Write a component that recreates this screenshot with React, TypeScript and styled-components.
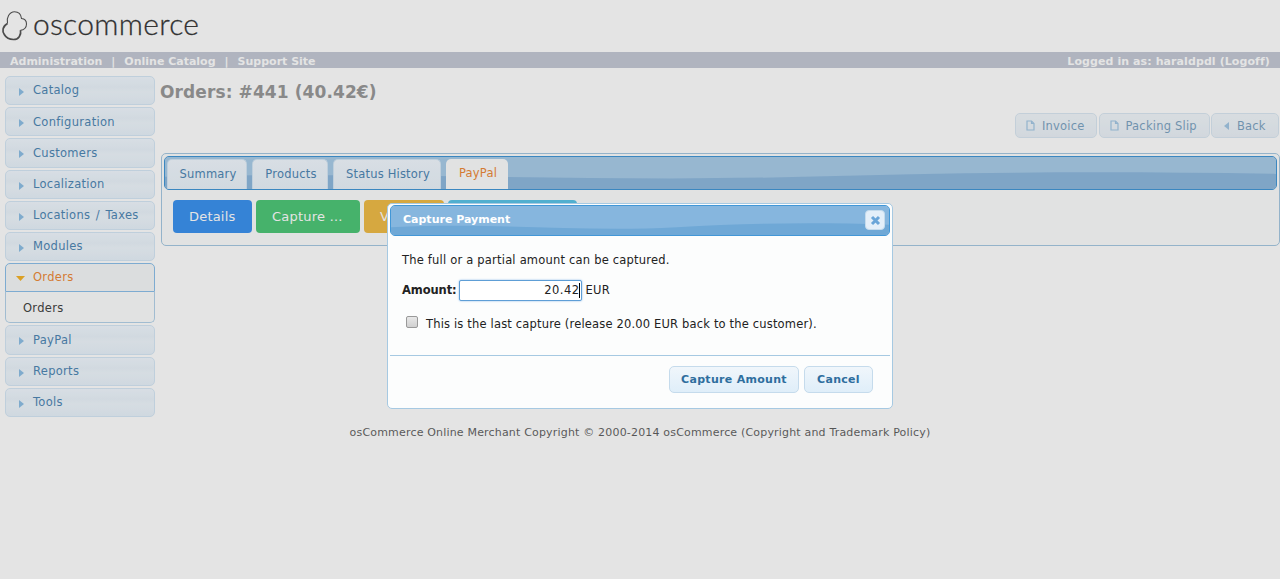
import React from "react";
import styled, { createGlobalStyle } from "styled-components";

const Global = createGlobalStyle`
  html, body { margin: 0; padding: 0; background: #fff; height: 100%; overflow: hidden; }
  body { font-family: "DejaVu Sans", Verdana, sans-serif; font-size: 12px; color: #222; }
  * { box-sizing: border-box; }
`;

const Page = styled.div`
  width: 1280px;
  height: 579px;
  position: relative;
  overflow: hidden;
`;
const Header = styled.header`
  height: 52px;
  display: flex;
  align-items: flex-start;
  padding: 10px 0 0 1px;
  gap: 5px;
`;
const LogoText = styled.span`
  font-family: Lato, "Open Sans", sans-serif;
  font-weight: 300;
  font-size: 30px;
  line-height: 27px;
  color: #333;
  letter-spacing: 0.3px;
  -webkit-text-stroke: 0.3px #444;
`;
const TopBar = styled.nav`
  height: 16px;
  background: #c5cad6;
  color: #fff;
  font-size: 11px;
  font-weight: 700;
  line-height: 19px;
  display: flex;
  justify-content: space-between;
  padding: 0 10px;
`;
const TopLinks = styled.div`
  display: flex;
  gap: 9px;
`;
const UserInfo = styled.span`
  letter-spacing: 0.09px;
`;
const Main = styled.div`
  display: flex;
  align-items: flex-start;
  padding: 8px 0 0 5px;
`;
const Sidebar = styled.aside`
  width: 150px;
  flex: none;
`;
const MenuItem = styled.div<{ $open?: boolean }>`
  height: 29.2px;
  border: 1px solid ${(p) => (p.$open ? "#8cc0ea" : "#d6e8f6")};
  border-radius: ${(p) => (p.$open ? "5px 5px 0 0" : "5px")};
  background: ${(p) =>
    p.$open
      ? "#f5f8f9"
      : "linear-gradient(180deg,#f2f9ff 0%,#eaf3fb 38%,#f0f7fd 55%,#e8f2fb 100%)"};
  color: ${(p) => (p.$open ? "#ee8a3a" : "#5088b5")};
  display: flex;
  align-items: center;
  font-size: 11.5px;
  letter-spacing: 0.3px;
  word-spacing: 1.5px;
  padding: 0 0 0.5px 27px;
  position: relative;
  margin-bottom: ${(p) => (p.$open ? "0" : "2px")};
`;
const Arrow = styled.svg`
  position: absolute;
  left: 13px;
  top: 11px;
`;
const OpenArrowIcon = styled.svg`
  position: absolute;
  left: 10px;
  top: 12px;
`;
const SubPanel = styled.div`
  height: 31px;
  margin-bottom: 2px;
  border: 1px solid #b4d3ea;
  border-top: 0;
  border-radius: 0 0 5px 5px;
  background: #fcfdfd;
  color: #444;
  font-size: 11.5px;
  letter-spacing: 0.3px;
  padding: 9px 0 0 17px;
`;
const Content = styled.main`
  flex: 1;
  padding-left: 5px;
`;
const Title = styled.h1`
  margin: 0;
  height: 29px;
  padding-top: 5px;
  font-size: 17px;
  line-height: 22px;
  font-weight: 700;
  letter-spacing: 0.1px;
  color: #9a9a9a;
`;
const ActionRow = styled.div`
  display: flex;
  justify-content: flex-end;
  gap: 1.5px;
  padding: 8px 1px 0 0;
  height: 48px;
`;
const ActionButton = styled.div<{ $w: number; $pad: number }>`
  width: ${(p) => p.$w}px;
  height: 25px;
  border: 1px solid #c5dbec;
  border-radius: 5px;
  background: linear-gradient(180deg,#ebf3fa,#dfeaf5);
  color: #2e6e9e;
  opacity: 0.62;
  font-size: 11.5px;
  letter-spacing: 0.2px;
  display: flex;
  align-items: center;
  gap: 7px;
  padding-left: ${(p) => p.$pad}px;
`;
const TabsPanel = styled.section`
  margin-left: 1px;
  height: 93px;
  border: 1px solid #a6c9e2;
  border-radius: 5px;
  background: #fcfdfd;
  padding: 2px;
`;
const Wave = styled.svg`
  position: absolute;
  left: 0;
  bottom: 0;
  width: 100%;
  height: 100%;
`;
const TabBar = styled.div`
  position: relative;
  height: 34px;
  border: 1px solid #4297d7;
  border-radius: 5px;
  background: #a9cde9;
  display: flex;
  align-items: flex-end;
  gap: 5px;
  padding-left: 2px;
  overflow: hidden;
`;
const Tab = styled.div<{ $active?: boolean; $w: number }>`
  position: relative;
  width: ${(p) => p.$w}px;
  height: 30px;
  border: ${(p) => (p.$active ? "0" : "1px solid #d6e8f6")};
  border-bottom: 0;
  border-radius: 5px 5px 0 0;
  background: ${(p) => (p.$active ? "#fcfdfd" : "linear-gradient(180deg,#f2f9ff,#eaf3fb)")};
  color: ${(p) => (p.$active ? "#ee8a3a" : "#5088b5")};
  font-size: 11.5px;
  letter-spacing: 0.2px;
  display: flex;
  align-items: center;
  justify-content: center;
  padding: 0 0 2px 2px;
`;
const PayRow = styled.div`
  display: flex;
  gap: 4px;
  padding: 10px 0 0 9px;
`;
const PayButton = styled.div<{ $bg: string; $w: number }>`
  width: ${(p) => p.$w}px;
  height: 33px;
  border-radius: 4px;
  background: ${(p) => p.$bg};
  color: #fff;
  font-size: 13px;
  letter-spacing: 0.2px;
  display: flex;
  align-items: center;
  padding-left: 16px;
`;
const Footer = styled.footer`
  position: absolute;
  left: 0;
  right: 0;
  top: 426px;
  text-align: center;
  font-size: 11px;
  letter-spacing: 0.18px;
  line-height: 14px;
  color: #000;
  opacity: 0.62;
`;
const Overlay = styled.div`
  position: absolute;
  inset: 0;
  background: rgba(0, 0, 0, 0.105);
`;
const Dialog = styled.div`
  position: absolute;
  left: 387px;
  top: 203px;
  width: 506px;
  height: 206px;
  background: #fcfdfd;
  border: 1px solid #a6c9e2;
  border-radius: 5px;
  padding: 1px 2px 2px;
  color: #222;
`;
const DialogTitle = styled.div`
  position: relative;
  height: 31px;
  border: 1px solid #4297d7;
  border-radius: 5px;
  background: #a0c8e8;
  color: #fff;
  font-size: 11px;
  font-weight: 700;
  line-height: 28px;
  padding-left: 12px;
  overflow: hidden;
`;
const TitleText = styled.span`
  position: relative;
`;
const CloseBox = styled.div`
  position: absolute;
  right: 4px;
  top: 4px;
  width: 20px;
  height: 20px;
  background: #e4eff9;
  border: 1px solid #c5dbec;
  border-radius: 4px;
  display: flex;
  align-items: center;
  justify-content: center;
`;
const DialogBody = styled.div`
  padding: 16px 12px 0 12px;
  font-size: 11.5px;
  height: 120px;
  border-bottom: 1px solid #a6c9e2;
`;
const Line = styled.p`
  margin: 0;
  line-height: 16px;
  letter-spacing: 0.2px;
`;
const AmountRow = styled.div`
  display: flex;
  align-items: center;
  gap: 2px;
  margin-top: 11px;
  height: 22px;
  letter-spacing: 0.2px;
`;
const AmountLabel = styled.b`
  font-weight: 700;
  font-size: 11.5px;
  letter-spacing: -0.1px;
`;
const FakeInput = styled.div`
  width: 123px;
  height: 21px;
  margin-right: 2px;
  border: 1px solid #5e9ed6;
  border-radius: 2px;
  box-shadow: 0 0 2px #7fb2e8;
  background: #fff;
  display: flex;
  justify-content: flex-end;
  align-items: center;
  padding-right: 1px;
  font-size: 11.5px;
  letter-spacing: 0.5px;
`;
const Caret = styled.span`
  width: 1px;
  height: 15px;
  background: #000;
  margin-left: -1px;
`;
const CheckRow = styled.div`
  display: flex;
  align-items: center;
  gap: 8px;
  margin-top: 16px;
  padding-left: 4px;
  letter-spacing: 0.17px;
`;
const CheckBox = styled.span`
  width: 12px;
  height: 12px;
  border: 1px solid #999;
  border-radius: 2px;
  background: linear-gradient(180deg,#e8e8e8,#d0d0d0);
  margin-top: -5px;
`;
const DialogButtons = styled.div`
  display: flex;
  justify-content: flex-end;
  gap: 5px;
  padding: 10px 17px 0 0;
`;
const DialogButton = styled.div<{ $w: number }>`
  width: ${(p) => p.$w}px;
  height: 27px;
  border: 1px solid #c5dbec;
  border-radius: 5px;
  background: linear-gradient(180deg,#f0f6fb,#dfeef9);
  color: #2e6e9e;
  font-size: 11px;
  font-weight: 700;
  letter-spacing: 0.3px;
  display: flex;
  align-items: center;
  justify-content: center;
  padding-bottom: 1px;
`;

const menu = ["Catalog", "Configuration", "Customers", "Localization", "Locations / Taxes", "Modules"];
const menu2 = ["PayPal", "Reports", "Tools"];

const ClosedArrow = () => (
  <Arrow width="5" height="8" viewBox="0 0 5 8"><path d="M0 0l5 4-5 4z" fill="#8fc0e6" /></Arrow>
);
const OpenArrow = () => (
  <OpenArrowIcon width="9" height="5" viewBox="0 0 9 5"><path d="M0 0h9L4.500 5z" fill="#f5b32a" /></OpenArrowIcon>
);
const DocIcon = () => (
  <svg width="9" height="11" viewBox="0 0 9 11" fill="none" stroke="#6da8d6" strokeWidth="1.2">
    <path d="M1 1h4.500L8 3.500V10H1z" /><path d="M5.500 1v2.500H8" />
  </svg>
);
const BackIcon = () => (
  <svg width="6" height="8" viewBox="0 0 6 8"><path d="M5 0L0 4l5 4z" fill="#6da8d6" /></svg>
);
const WaveArt = ({ light, dark, drop = 0 }: { light: string; dark: string; drop?: number }) => (
  <Wave viewBox="0 0 1114 34" preserveAspectRatio="none">
    <rect width="1114" height="34" fill={light} />
    <path transform={`translate(0 ${drop})`} d="M0 21C250 15 420 27 640 21C800 16 950 15 1114 18V34H0z" fill={dark} />
  </Wave>
);

export default function App() {
  return (
    <Page>
      <Global />
      <Header>
        <svg width="27" height="31" viewBox="0 0 27 31" fill="none" stroke="#555">
          <path d="M6.500 13.500C5 8 8.500 1.800 13.500 1.800C17.500 1.800 20 4.500 20.500 8.500C23.500 8.800 25.500 11 25.500 14C25.500 17.500 23 20 19.500 20.200" strokeWidth="1.1" />
          <path d="M19.500 20.200C20.500 25 17.500 29.500 12.500 29.500C8 29.500 5 27.500 3.300 24.500C1 21 1.300 16.500 6.500 13.500" strokeWidth="1.7" />
        </svg>
        <LogoText>oscommerce</LogoText>
      </Header>
      <TopBar>
        <TopLinks>
          <span>Administration</span><span>|</span><span>Online Catalog</span><span>|</span><span>Support Site</span>
        </TopLinks>
        <UserInfo>Logged in as: haraldpdl (Logoff)</UserInfo>
      </TopBar>
      <Main>
        <Sidebar>
          {menu.map((m) => (
            <MenuItem key={m}><ClosedArrow />{m}</MenuItem>
          ))}
          <MenuItem $open><OpenArrow />Orders</MenuItem>
          <SubPanel>Orders</SubPanel>
          {menu2.map((m) => (
            <MenuItem key={m}><ClosedArrow />{m}</MenuItem>
          ))}
        </Sidebar>
        <Content>
          <Title>Orders: #441 (40.42€)</Title>
          <ActionRow>
            <ActionButton $w={82} $pad={10}><DocIcon />Invoice</ActionButton>
            <ActionButton $w={111} $pad={10}><DocIcon />Packing Slip</ActionButton>
            <ActionButton $w={68} $pad={12}><BackIcon />Back</ActionButton>
          </ActionRow>
          <TabsPanel>
            <TabBar>
              <WaveArt light="#a9cde9" dark="#8fb9de" />
              <Tab $w={80}>Summary</Tab>
              <Tab $w={76}>Products</Tab>
              <Tab $w={108}>Status History</Tab>
              <Tab $w={62} $active>PayPal</Tab>
            </TabBar>
            <PayRow>
              <PayButton $bg="#3c93f0" $w={79}>Details</PayButton>
              <PayButton $bg="#4fc878" $w={104}>Capture …</PayButton>
              <PayButton $bg="#f0bc48" $w={80}>Void</PayButton>
              <PayButton $bg="#5bc4e8" $w={129} />
            </PayRow>
          </TabsPanel>
        </Content>
      </Main>
      <Footer>osCommerce Online Merchant Copyright © 2000-2014 osCommerce (Copyright and Trademark Policy)</Footer>
      <Overlay />
      <Dialog>
        <DialogTitle>
          <WaveArt light="#86b6de" dark="#6fa8d6" drop={4} />
          <TitleText>Capture Payment</TitleText>
          <CloseBox>
            <svg width="11" height="11" viewBox="0 0 11 11"><path d="M2 2l7 7M9 2l-7 7" stroke="#6aa5d8" strokeWidth="3" /></svg>
          </CloseBox>
        </DialogTitle>
        <DialogBody>
          <Line>The full or a partial amount can be captured.</Line>
          <AmountRow>
            <AmountLabel>Amount:</AmountLabel>
            <FakeInput>20.42<Caret /></FakeInput>
            <span>EUR</span>
          </AmountRow>
          <CheckRow><CheckBox />This is the last capture (release 20.00 EUR back to the customer).</CheckRow>
        </DialogBody>
        <DialogButtons>
          <DialogButton $w={130}>Capture Amount</DialogButton>
          <DialogButton $w={69}>Cancel</DialogButton>
        </DialogButtons>
      </Dialog>
    </Page>
  );
}
